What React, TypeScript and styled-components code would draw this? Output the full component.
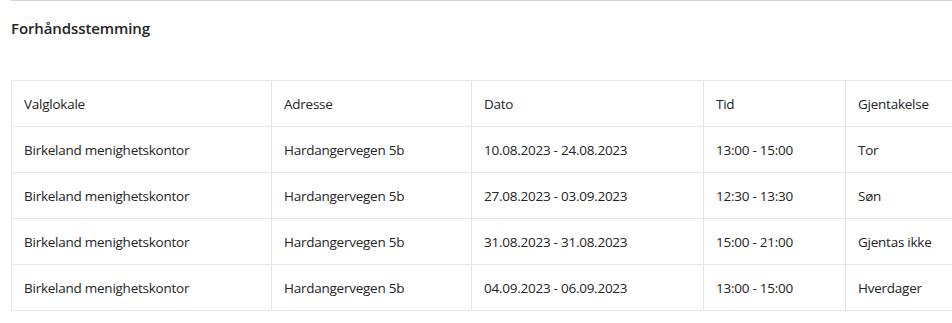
import React from 'react'
import styled, { createGlobalStyle } from 'styled-components'

const GlobalStyle = createGlobalStyle`
  html, body {
    margin: 0;
    padding: 0;
    background: #ffffff;
    overflow: hidden;
  }
  body {
    font-family: 'Open Sans', 'Noto Sans', sans-serif;
    color: #242424;
  }
`

const Page = styled.div`
  width: 952px;
  height: 323px;
  padding-left: 11px;
  box-sizing: border-box;
  overflow: hidden;
`

const Section = styled.section`
  border-top: 1px solid #d4d4e0;
  width: 1000px;
`

const Title = styled.h2`
  margin: 0;
  padding-top: 17px;
  height: 79px;
  box-sizing: border-box;
  font-size: 15px;
  font-weight: 600;
  color: #242424;
  letter-spacing: -0.1px;
`

const Table = styled.table`
  border-collapse: collapse;
  table-layout: fixed;
  width: 1000px;
`

const Cell = styled.td<{ $w?: number }>`
  width: ${p => (p.$w ? `${p.$w}px` : 'auto')};
  height: 46px;
  padding: 0 0 0 12px;
  box-sizing: border-box;
  border: 1px solid #e6e6ec;
  font-size: 13.5px;
  font-weight: 400;
  letter-spacing: -0.25px;
  text-align: left;
  white-space: nowrap;
  color: #242424;
`

const HeadCell = styled(Cell).attrs({ as: 'th' })``

const columns = [
  { key: 'sted', label: 'Valglokale', w: 260 },
  { key: 'adresse', label: 'Adresse', w: 200 },
  { key: 'dato', label: 'Dato', w: 232 },
  { key: 'tid', label: 'Tid', w: 142 },
  { key: 'gjentakelse', label: 'Gjentakelse', w: 166 },
]

const rows = [
  ['Birkeland menighetskontor', 'Hardangervegen 5b', '10.08.2023 - 24.08.2023', '13:00 - 15:00', 'Tor'],
  ['Birkeland menighetskontor', 'Hardangervegen 5b', '27.08.2023 - 03.09.2023', '12:30 - 13:30', 'Søn'],
  ['Birkeland menighetskontor', 'Hardangervegen 5b', '31.08.2023 - 31.08.2023', '15:00 - 21:00', 'Gjentas ikke'],
  ['Birkeland menighetskontor', 'Hardangervegen 5b', '04.09.2023 - 06.09.2023', '13:00 - 15:00', 'Hverdager'],
]

const App = () => (
  <Page>
    <GlobalStyle />
    <Section>
      <Title>Forhåndsstemming</Title>
      <Table>
        <thead>
          <tr>
            {columns.map(c => (
              <HeadCell key={c.key} $w={c.w}>
                {c.label}
              </HeadCell>
            ))}
          </tr>
        </thead>
        <tbody>
          {rows.map((r, i) => (
            <tr key={i}>
              {r.map((v, j) => (
                <Cell key={j}>{v}</Cell>
              ))}
            </tr>
          ))}
        </tbody>
      </Table>
    </Section>
  </Page>
)

export default App
